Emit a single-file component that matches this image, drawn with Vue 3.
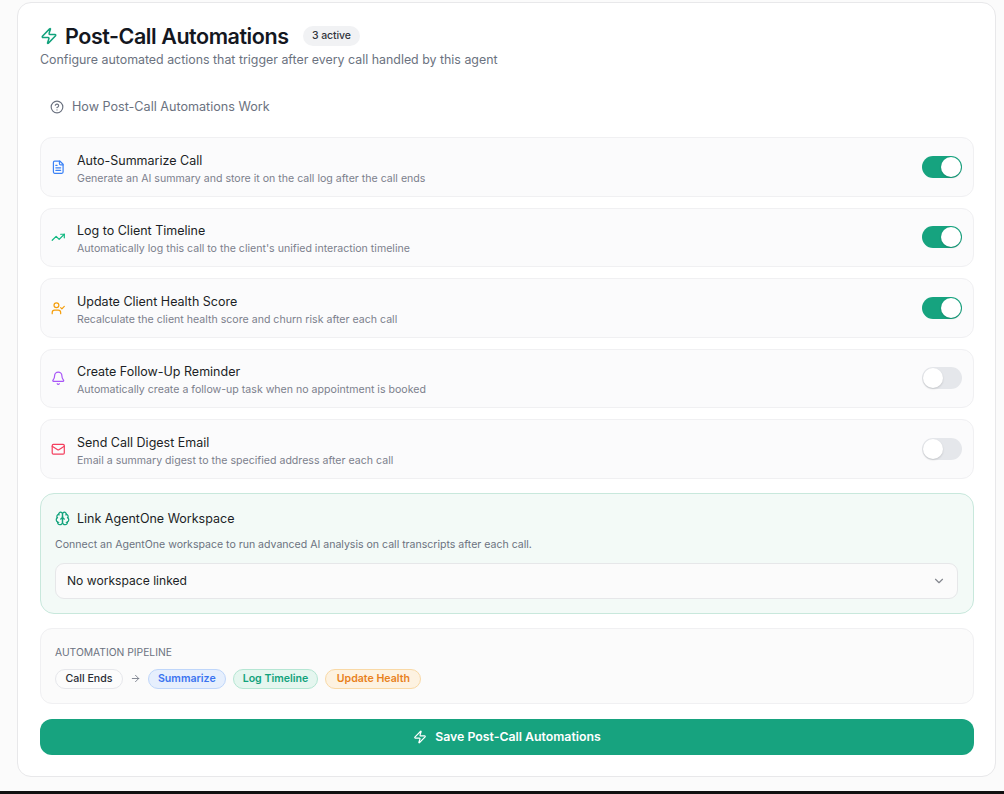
<template>
  <div class="page">
    <section class="card">
      <header class="head">
        <div class="title-row">
          <svg class="icon zap" viewBox="0 0 24 24"><path :d="zapPath" /></svg>
          <h1>Post-Call Automations</h1>
          <span class="count">{{ activeCount }} active</span>
        </div>
        <p class="subtitle">Configure automated actions that trigger after every call handled by this agent</p>
      </header>

      <button class="how">
        <svg class="icon help" viewBox="0 0 24 24">
          <circle cx="12" cy="12" r="10" />
          <path d="M9.09 9a3 3 0 0 1 5.83 1c0 2-3 3-3 3" />
          <path d="M12 17h.01" />
        </svg>
        How Post-Call Automations Work
      </button>

      <div class="rows">
        <div v-for="row in rows" :key="row.title" class="row">
          <svg class="icon row-icon" :style="{ color: row.color }" viewBox="0 0 24 24" v-html="row.icon"></svg>
          <div class="row-text">
            <div class="row-title">{{ row.title }}</div>
            <div class="row-desc">{{ row.desc }}</div>
          </div>
          <button class="switch" :class="{ on: row.on }" @click="row.on = !row.on"><span class="knob"></span></button>
        </div>
      </div>

      <div class="link-panel">
        <div class="link-title">
          <svg class="icon brain" viewBox="0 0 24 24">
            <path d="M12 5a3 3 0 1 0-5.997.125 4 4 0 0 0-2.526 5.77 4 4 0 0 0 .556 6.588A4 4 0 1 0 12 18Z" />
            <path d="M12 5a3 3 0 1 1 5.997.125 4 4 0 0 1 2.526 5.77 4 4 0 0 1-.556 6.588A4 4 0 1 1 12 18Z" />
            <path d="M15 13a4.5 4.5 0 0 1-3-4 4.5 4.5 0 0 1-3 4" />
            <path d="M17.599 6.5a3 3 0 0 0 .399-1.375" />
            <path d="M6.003 5.125A3 3 0 0 0 6.401 6.5" />
            <path d="M3.477 10.896a4 4 0 0 1 .585-.396" />
            <path d="M19.938 10.5a4 4 0 0 1 .585.396" />
            <path d="M6 18a4 4 0 0 1-1.967-.516" />
            <path d="M19.967 17.484A4 4 0 0 1 18 18" />
          </svg>
          Link AgentOne Workspace
        </div>
        <p class="link-desc">Connect an AgentOne workspace to run advanced AI analysis on call transcripts after each call.</p>
        <div class="select">
          <span>No workspace linked</span>
          <svg class="icon chevron" viewBox="0 0 24 24"><path d="m6 9 6 6 6-6" /></svg>
        </div>
      </div>

      <div class="pipeline">
        <div class="pipe-label">AUTOMATION PIPELINE</div>
        <div class="pipe-steps">
          <span class="step plain">Call Ends</span>
          <svg class="icon arrow" viewBox="0 0 24 24"><path d="M5 12h14" /><path d="m12 5 7 7-7 7" /></svg>
          <span class="step blue">Summarize</span>
          <span class="step green">Log Timeline</span>
          <span class="step orange">Update Health</span>
        </div>
      </div>

      <button class="save">
        <svg class="icon save-icon" viewBox="0 0 24 24"><path :d="zapPath" /></svg>
        Save Post-Call Automations
      </button>
    </section>
    <div class="taskbar"></div>
  </div>
</template>

<script setup>
import { computed, reactive } from "vue";

const zapPath =
  "M4 14a1 1 0 0 1-.78-1.63l9.9-10.2a.5.5 0 0 1 .86.46l-1.92 6.02A1 1 0 0 0 13 10h7a1 1 0 0 1 .78 1.63l-9.9 10.2a.5.5 0 0 1-.86-.46l1.92-6.02A1 1 0 0 0 11 14z";

const rows = reactive([
  {
    title: "Auto-Summarize Call",
    desc: "Generate an AI summary and store it on the call log after the call ends",
    color: "#3b82f6",
    on: true,
    icon: '<path d="M15 2H6a2 2 0 0 0-2 2v16a2 2 0 0 0 2 2h12a2 2 0 0 0 2-2V7Z"/><path d="M14 2v4a2 2 0 0 0 2 2h4"/><path d="M10 9H8"/><path d="M16 13H8"/><path d="M16 17H8"/>',
  },
  {
    title: "Log to Client Timeline",
    desc: "Automatically log this call to the client's unified interaction timeline",
    color: "#10b981",
    on: true,
    icon: '<polyline points="22 7 13.5 15.5 8.5 10.5 2 17"/><polyline points="16 7 22 7 22 13"/>',
  },
  {
    title: "Update Client Health Score",
    desc: "Recalculate the client health score and churn risk after each call",
    color: "#f59e0b",
    on: true,
    icon: '<path d="M16 21v-2a4 4 0 0 0-4-4H6a4 4 0 0 0-4 4v2"/><circle cx="9" cy="7" r="4"/><polyline points="16 11 18 13 22 9"/>',
  },
  {
    title: "Create Follow-Up Reminder",
    desc: "Automatically create a follow-up task when no appointment is booked",
    color: "#a855f7",
    on: false,
    icon: '<path d="M10.268 21a2 2 0 0 0 3.464 0"/><path d="M3.262 15.326A1 1 0 0 0 4 17h16a1 1 0 0 0 .74-1.673C19.41 13.956 18 12.499 18 8A6 6 0 0 0 6 8c0 4.499-1.411 5.956-2.738 7.326"/>',
  },
  {
    title: "Send Call Digest Email",
    desc: "Email a summary digest to the specified address after each call",
    color: "#f43f5e",
    on: false,
    icon: '<rect x="2" y="4" width="20" height="16" rx="2"/><path d="m22 7-8.97 5.7a1.94 1.94 0 0 1-2.06 0L2 7"/>',
  },
]);

const activeCount = computed(() => rows.filter((r) => r.on).length);
</script>

<style>
html,
body {
  margin: 0;
  background: #fbfbfb;
}
</style>

<style scoped>
.page {
  height: 794px;
  display: flex;
  flex-direction: column;
  padding: 2px 8px 0 17px;
  box-sizing: border-box;
  background: #fbfbfb;
  font-family: Inter, "Liberation Sans", sans-serif;
  overflow: hidden;
  position: relative;
}
.card {
  width: 979px;
  height: 775px;
  box-sizing: border-box;
  padding: 21px 21px 0 22px;
  background: #fff;
  border: 1px solid #e8e8ea;
  border-radius: 14px;
}
.icon {
  fill: none;
  stroke: currentColor;
  stroke-width: 2;
  stroke-linecap: round;
  stroke-linejoin: round;
  flex-shrink: 0;
}
.title-row {
  display: flex;
  align-items: center;
  height: 24px;
}
.zap {
  width: 18px;
  height: 18px;
  color: #12a27c;
  margin-right: 7px;
}
h1 {
  margin: 0;
  font-size: 21.5px;
  font-weight: 600;
  letter-spacing: -0.45px;
  color: #14171f;
}
.count {
  margin-left: 14px;
  height: 20px;
  line-height: 20px;
  padding: 0 9.5px;
  border-radius: 10px;
  background: #f1f2f4;
  font-size: 10.5px;
  font-weight: 500;
  color: #30343c;
  letter-spacing: -0.1px;
}
.subtitle {
  margin: 3px 0 0;
  font-size: 12.4px;
  line-height: 18px;
  color: #6b7280;
}
.how {
  display: flex;
  align-items: center;
  gap: 8px;
  margin: 27.5px 0 0 10px;
  padding: 0;
  height: 20px;
  border: 0;
  background: none;
  font: inherit;
  font-size: 12.6px;
  font-weight: 400;
  color: #6b7280;
}
.help {
  width: 14px;
  height: 14px;
}
.rows {
  margin-top: 20.5px;
  display: flex;
  flex-direction: column;
  gap: 11px;
}
.row {
  height: 59.5px;
  box-sizing: border-box;
  padding: 0 11px 0 10px;
  display: flex;
  align-items: center;
  background: #fbfbfc;
  border: 1px solid #f0f0f2;
  border-radius: 12px;
}
.row-icon {
  width: 14.5px;
  height: 14.5px;
  margin-right: 11.5px;
}
.row-text {
  flex: 1;
  padding-top: 4px;
}
.row-title {
  font-size: 12.5px;
  line-height: 18px;
  font-weight: 400;
  color: #1c1f26;
}
.row-desc {
  margin-top: 1px;
  font-size: 10.6px;
  line-height: 15px;
  color: #7b808c;
}
.switch {
  width: 40px;
  height: 22px;
  padding: 0;
  border: 0;
  border-radius: 11px;
  background: #e5e7eb;
  position: relative;
}
.switch.on {
  background: #16a37f;
}
.knob {
  position: absolute;
  left: 1px;
  top: 1px;
  width: 20px;
  height: 20px;
  border-radius: 50%;
  background: #fff;
  box-shadow: 0 1px 2px rgba(0, 0, 0, 0.15);
}
.switch.on .knob {
  left: 19px;
}
.link-panel {
  margin-top: 14px;
  height: 121px;
  box-sizing: border-box;
  padding: 16px 15px 0 14px;
  background: #f3faf7;
  border: 1px solid #c8e8dc;
  border-radius: 14px;
}
.link-title {
  display: flex;
  align-items: center;
  gap: 7px;
  height: 18px;
  font-size: 12.5px;
  font-weight: 400;
  color: #1c1f26;
}
.brain {
  width: 15px;
  height: 15px;
  color: #12a27c;
}
.link-desc {
  margin: 9px 0 0;
  font-size: 10.55px;
  line-height: 16px;
  color: #6b7280;
}
.select {
  margin-top: 10px;
  height: 36px;
  box-sizing: border-box;
  padding: 0 11px 0 11px;
  display: flex;
  align-items: center;
  justify-content: space-between;
  background: #fbfbfb;
  border: 1px solid #e6e7e9;
  border-radius: 9px;
  font-size: 12.1px;
  color: #1c1f26;
}
.chevron {
  width: 14px;
  height: 14px;
  color: #85888f;
}
.pipeline {
  margin-top: 14px;
  height: 76px;
  box-sizing: border-box;
  padding: 16px 14px 0;
  background: #fbfbfb;
  border: 1px solid #f0f0f2;
  border-radius: 12px;
}
.pipe-label {
  font-size: 10.3px;
  line-height: 14px;
  color: #6b7280;
}
.pipe-steps {
  display: flex;
  align-items: center;
  gap: 7px;
  margin-top: 10px;
}
.step {
  height: 20px;
  line-height: 18px;
  box-sizing: border-box;
  padding: 0 9px;
  border: 1px solid;
  border-radius: 10px;
  font-size: 10.6px;
  font-weight: 600;
}
.plain {
  color: #2a2d35;
  background: #fcfcfc;
  border-color: #e6e7eb;
  font-weight: 500;
  padding: 0 9.5px;
}
.arrow {
  width: 11px;
  height: 11px;
  color: #7b808c;
}
.blue {
  color: #3b74f0;
  background: #e6effd;
  border-color: #bfd6fa;
}
.green {
  color: #12a27c;
  background: #e5f6ef;
  border-color: #b5e6d3;
}
.orange {
  color: #e8811c;
  background: #fdf2e1;
  border-color: #f9d9a6;
  padding: 0 10.5px;
}
.save {
  margin-top: 15px;
  width: 100%;
  height: 36px;
  display: flex;
  align-items: center;
  justify-content: center;
  gap: 8px;
  border: 0;
  border-radius: 12px;
  background: #17a37f;
  color: #fff;
  font: inherit;
  font-size: 12.3px;
  font-weight: 600;
}
.save-icon {
  width: 14px;
  height: 14px;
}
.taskbar {
  position: absolute;
  left: 0;
  right: 0;
  bottom: 0;
  height: 3px;
  background: #111;
}
</style>
